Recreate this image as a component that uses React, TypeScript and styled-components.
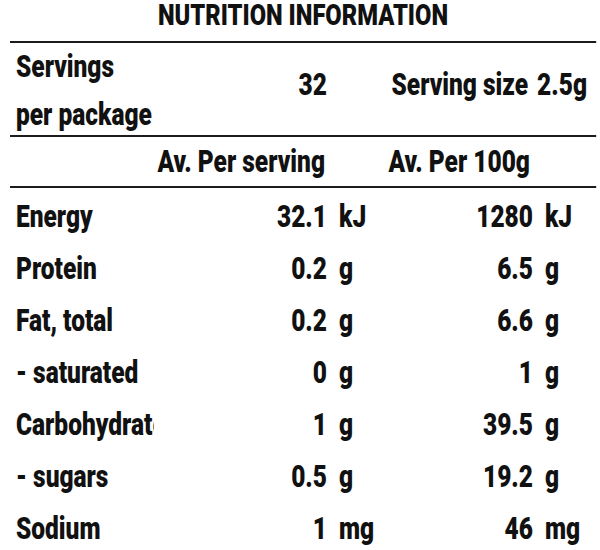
import styled, { createGlobalStyle } from 'styled-components'

// the label font is a condensed grotesk; we squeeze Roboto to get there
const SQUEEZE = 0.79
const d = (real: number) => `${(real / SQUEEZE).toFixed(2)}px`

const GlobalStyle = createGlobalStyle`
	html, body {
		margin: 0;
		padding: 0;
		background: #fff;
	}

	body {
		font-family: Roboto, "Liberation Sans", sans-serif;
		font-weight: 900;
		color: #111;
	}
`

const columns = [144, 173, 83, 123].map(d).join(' ') + ' 1fr'
const rule = '2px solid #1c1c1c'

const Panel = styled.div`
	width: ${d(586)};
	margin-left: 10px;
	transform: scaleX(${SQUEEZE});
	transform-origin: left top;
`

const Title = styled.h1`
	margin: 0;
	height: 41px;
	font-size: 30px;
	line-height: 30px;
	font-weight: 900;
	text-align: center;
	border-bottom: ${rule};
`

const Row = styled.div<{ $height: number, $ruled?: boolean }>`
	display: grid;
	grid-template-columns: ${columns};
	align-items: center;
	height: ${props => props.$height}px;
	font-size: 31px;
	border-bottom: ${props => props.$ruled ? rule : 'none'};
`

const ServingsRow = styled(Row)`
	align-items: start;
	line-height: 84px;
`

const ServingsLabel = styled.div`
	padding-left: ${d(6)};
	line-height: 48px;
	white-space: nowrap;
`

const ServingSize = styled.div`
	grid-column: 3 / 6;
	justify-self: end;
	display: flex;
	gap: ${d(9)};
	padding-right: ${d(9)};
`

const HeadCell = styled.div<{ $from: number, $inset: number }>`
	grid-column: ${props => props.$from} / span 2;
	justify-self: end;
	padding-right: ${props => d(props.$inset)};
`

const Body = styled.div`
	padding-top: 2px;
`

const Label = styled.div`
	padding-left: ${d(6)};
	white-space: nowrap;
	overflow: hidden;
`

const Amount = styled.div`
	justify-self: end;
`

const Unit = styled.div`
	padding-left: ${d(12)};
`

interface Nutrient {
	name: string,
	perServing: string,
	per100g: string,
	unit: string
}

const nutrients: Nutrient[] = [
	{ name: 'Energy', perServing: '32.1', per100g: '1280', unit: 'kJ' },
	{ name: 'Protein', perServing: '0.2', per100g: '6.5', unit: 'g' },
	{ name: 'Fat, total', perServing: '0.2', per100g: '6.6', unit: 'g' },
	{ name: '- saturated', perServing: '0', per100g: '1', unit: 'g' },
	{ name: 'Carbohydrate', perServing: '1', per100g: '39.5', unit: 'g' },
	{ name: '- sugars', perServing: '0.5', per100g: '19.2', unit: 'g' },
	{ name: 'Sodium', perServing: '1', per100g: '46', unit: 'mg' },
]

const App = () => {
	return (
		<>
			<GlobalStyle />
			<Panel>
				<Title>NUTRITION INFORMATION</Title>
				<ServingsRow $height={92} $ruled>
					<ServingsLabel>Servings<br />per package</ServingsLabel>
					<Amount>32</Amount>
					<ServingSize>
						<span>Serving size</span>
						<span>2.5g</span>
					</ServingSize>
				</ServingsRow>
				<Row $height={49} $ruled>
					<HeadCell $from={1} $inset={2}>Av. Per serving</HeadCell>
					<HeadCell $from={3} $inset={3}>Av. Per 100g</HeadCell>
				</Row>
				<Body>
					{nutrients.map(item => (
						<Row key={item.name} $height={52}>
							<Label>{item.name}</Label>
							<Amount>{item.perServing}</Amount>
							<Unit>{item.unit}</Unit>
							<Amount>{item.per100g}</Amount>
							<Unit>{item.unit}</Unit>
						</Row>
					))}
				</Body>
			</Panel>
		</>
	)
}

export default App
